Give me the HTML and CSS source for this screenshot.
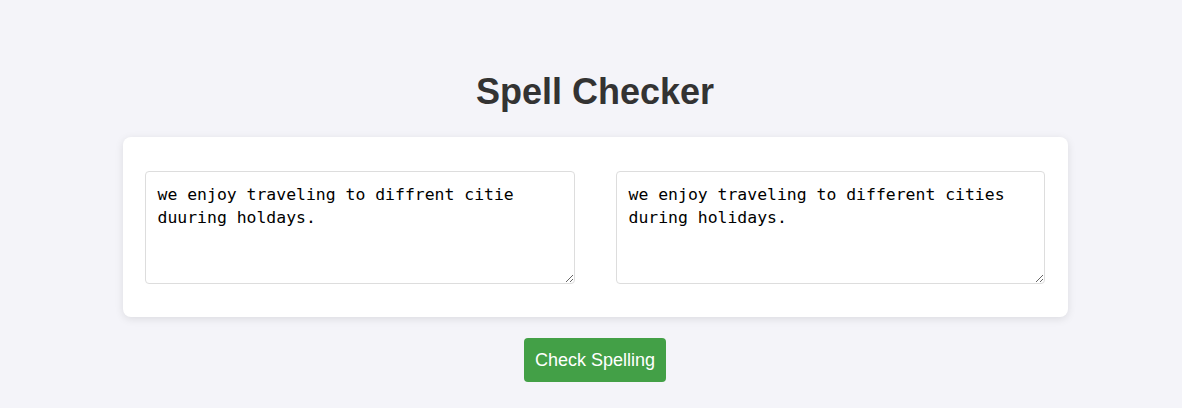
FILE: index.html
```html
<!DOCTYPE html>
<html lang="en">
<head>
<meta charset="utf-8">
<title>Spell Checker</title>
<link rel="stylesheet" href="styles.css">
</head>
<body>
<main class="page">
  <h1 class="title">Spell Checker</h1>
  <section class="card">
    <textarea class="box">we enjoy traveling to diffrent citie duuring holdays.</textarea>
    <textarea class="box box-right">we enjoy traveling to different cities during holidays.</textarea>
  </section>
  <button class="check-btn" type="button">Check Spelling</button>
</main>
</body>
</html>
```
FILE: styles.css
```css
html, body {
  margin: 0;
  padding: 0;
  background: #f4f4f9;
}

.page {
  box-sizing: border-box;
  min-height: 408px;
  padding: 71px 0 0 8px;
  display: flex;
  flex-direction: column;
  align-items: center;
  font-family: "Liberation Sans", Arial, sans-serif;
}

.title {
  margin: 0 0 25px;
  font-size: 36px;
  line-height: 41px;
  font-weight: bold;
  color: #333333;
}

.card {
  box-sizing: border-box;
  width: 945px;
  height: 180px;
  padding: 34px 23px 33px 22px;
  background: #ffffff;
  border-radius: 8px;
  box-shadow: 0 2px 8px rgba(0, 0, 0, 0.1);
  display: flex;
  justify-content: space-between;
}

.box {
  box-sizing: border-box;
  width: 430px;
  height: 113px;
  margin: 0;
  padding: 11px 10px 9px 12px;
  border: 1px solid #dddddd;
  border-radius: 4px;
  background: #ffffff;
  color: #000000;
  font-family: "DejaVu Sans Mono", "Liberation Mono", monospace;
  font-size: 16.45px;
  line-height: 23px;
  resize: both;
  outline: none;
}

.box-right {
  width: 429px;
}

.check-btn {
  margin-top: 21px;
  width: 142px;
  height: 44px;
  padding: 0;
  border: none;
  border-radius: 4px;
  background: #43a047;
  color: #ffffff;
  font-family: "Liberation Sans", Arial, sans-serif;
  font-size: 18px;
  cursor: pointer;
}
```
